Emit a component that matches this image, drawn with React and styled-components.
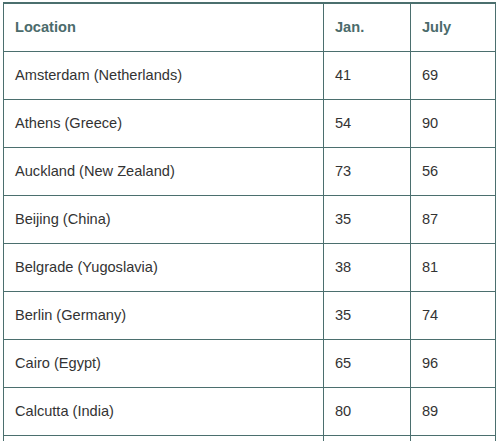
import React from 'react';
import styled, { createGlobalStyle } from 'styled-components';

const GlobalStyle = createGlobalStyle`
  body {
    margin: 0;
    background: #fff;
    font-family: "Liberation Sans", Arial, sans-serif;
  }
`;

const Wrapper = styled.div`
  padding: 2px 0 0 3px;
`;

const Table = styled.table`
  width: 493px;
  border-collapse: separate;
  border-spacing: 0;
  border-top: 2px solid #4b6f6e;
  border-left: 1px solid #4b6f6e;
  table-layout: fixed;
`;

const HeadCell = styled.th`
  box-sizing: border-box;
  text-align: left;
  font-weight: bold;
  font-size: 14.6px;
  line-height: 17px;
  color: #4b6b6b;
  padding: 15px 11px;
  border-right: 1px solid #4b6f6e;
  border-bottom: 1px solid #4b6f6e;
  width: ${p => (p.$w ? `${p.$w}px` : 'auto')};
`;

const Cell = styled.td`
  font-size: 14.6px;
  line-height: 17px;
  color: #333;
  padding: 15px 11px;
  border-right: 1px solid #4b6f6e;
  border-bottom: 1px solid #4b6f6e;
  white-space: nowrap;
`;

const rows = [
  ['Amsterdam (Netherlands)', 41, 69],
  ['Athens (Greece)', 54, 90],
  ['Auckland (New Zealand)', 73, 56],
  ['Beijing (China)', 35, 87],
  ['Belgrade (Yugoslavia)', 38, 81],
  ['Berlin (Germany)', 35, 74],
  ['Cairo (Egypt)', 65, 96],
  ['Calcutta (India)', 80, 89],
  ['Cape Town (South Africa)', 70, 55],
  ['Chicago (USA)', 29, 84],
];

export default function App() {
  return (
    <Wrapper>
      <GlobalStyle />
      <Table>
        <thead>
          <tr>
            <HeadCell $w={320}>Location</HeadCell>
            <HeadCell $w={87}>Jan.</HeadCell>
            <HeadCell>July</HeadCell>
          </tr>
        </thead>
        <tbody>
          {rows.map(([city, jan, july]) => (
            <tr key={city}>
              <Cell>{city}</Cell>
              <Cell>{jan}</Cell>
              <Cell>{july}</Cell>
            </tr>
          ))}
        </tbody>
      </Table>
    </Wrapper>
  );
}
